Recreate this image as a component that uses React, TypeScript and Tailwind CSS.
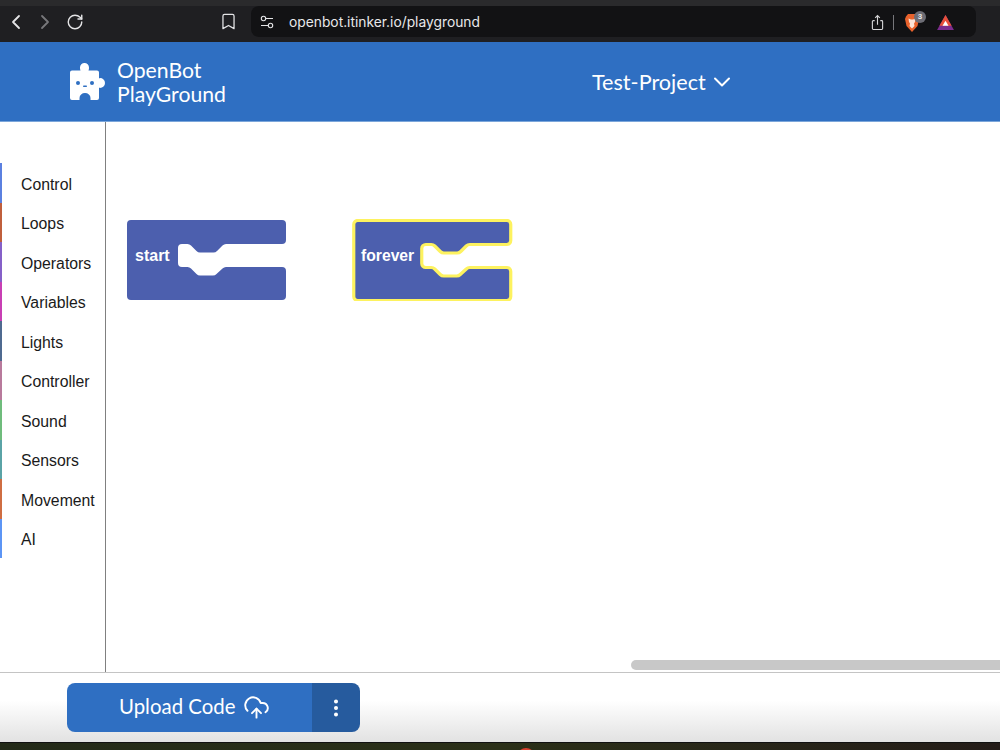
import { ChevronLeft, ChevronRight, RotateCw, Bookmark, ChevronDown, CloudUpload, EllipsisVertical } from "lucide-react";

const cats: [string, string][] = [
  ["Control", "bg-[#5b80e0]"],
  ["Loops", "bg-[#c05f3c]"],
  ["Operators", "bg-[#8560c8]"],
  ["Variables", "bg-[#c83fb4]"],
  ["Lights", "bg-[#4f6a90]"],
  ["Controller", "bg-[#b87a9c]"],
  ["Sound", "bg-[#6fbc7c]"],
  ["Sensors", "bg-[#5aa3a6]"],
  ["Movement", "bg-[#cf6d42]"],
  ["AI", "bg-[#5c95f5]"],
];

function blockPath(w: number, n: number) {
  return `M4 0H${w - 4}a4 4 0 0 1 4 4V20a4 4 0 0 1 -4 4H${n + 48}q-2 0 -3.500 1.500L${n + 39} 31q-1.500 1.500 -3.500 1.500H${n + 22}q-2 0 -3.500 -1.500L${n + 13} 25.500q-1.500 -1.500 -3.500 -1.500H${n + 4}a4 4 0 0 0 -4 4V43a4 4 0 0 0 4 4H${n + 9.5}q2 0 3.500 1.500L${n + 18.5} 54q1.500 1.500 3.500 1.500H${n + 35}q2 0 3.500 -1.500L${n + 44.5} 48.500q1.500 -1.500 3.500 -1.500H${w - 4}a4 4 0 0 1 4 4V76a4 4 0 0 1 -4 4H4a4 4 0 0 1 -4 -4V4a4 4 0 0 1 4 -4Z`;
}

export default function App() {
  return (
    <div className="relative flex h-[750px] w-[1000px] flex-col overflow-hidden bg-white font-['Liberation_Sans',sans-serif]">
      {/* browser chrome */}
      <div className="h-[42px] shrink-0 bg-[#1f1f22] border-t-[6px] border-[#2a2a2c] flex items-start text-[#e4e4e6]">
        <div className="flex items-center h-[31px] pl-[4px] w-[219px]">
          <ChevronLeft size={24} strokeWidth={1.8} />
          <ChevronRight size={24} strokeWidth={1.8} className="ml-[5px] text-[#77777b]" />
          <RotateCw size={18} strokeWidth={1.9} className="ml-[9px]" />
        </div>
        <div className="w-[32px] h-[31px] flex items-center">
          <Bookmark size={19} strokeWidth={1.6} />
        </div>
        <div className="flex h-[31px] w-[725px] items-center rounded-lg bg-[#121214]">
          <svg width="14" height="14" viewBox="0 0 14 14" className="ml-[9px]" fill="none" stroke="#e4e4e6" strokeWidth="1.1">
            <circle cx="3.5" cy="3.5" r="2.2" />
            <path d="M6 3.500h7M1 10.500h7" />
            <circle cx="10.5" cy="10.5" r="2.2" />
          </svg>
          <span className="ml-[15px] mt-[2px] text-[13.8px] font-['Inter',sans-serif] text-[#e8e8ea]">openbot.itinker.io/playground</span>
          <div className="ml-auto mt-[2px] flex items-center">
            <svg width="13" height="18" viewBox="0 0 14 18" fill="none" stroke="#d4d4d6" strokeWidth="1.2">
              <path d="M4 6.500H2.500a1 1 0 0 0-1 1V15a1 1 0 0 0 1 1h9a1 1 0 0 0 1-1V7.500a1 1 0 0 0-1-1H10M7 11V1M4.500 3.500 7 1l2.500 2.500" />
            </svg>
            <div className="ml-[9px] h-[15px] w-px bg-[#77777b]" />
            <div className="relative ml-[11px] h-[18px] w-[14px]">
              <svg width="14" height="18" viewBox="0 0 14 18" className="block">
                <path d="M3 0h8l2 2.500L14 5l-1.500 7L7 18 1.500 12 0 5l1-2.500Z" fill="#e8622c" />
                <path d="M3.500 4.500 6 5.500h2l2.500-1-.5 3.500-1 1.500L9.500 12 7 14.500 4.500 12 5 9.500 4 8Z" fill="#fbe3d6" />
              </svg>
              <span className="absolute -right-[7px] -top-[3px] flex h-[12px] w-[12px] items-center justify-center rounded-full bg-[#6d6d75] text-[8px] font-bold text-[#e8e8ea]">3</span>
            </div>
            <svg width="17" height="15" viewBox="0 0 18 16" className="ml-[18px] mr-[22px]">
              <path d="M9 0 18 16H0Z" fill="#7b2d8e" />
              <path d="M9 0 15.500 11.500H2.500Z" fill="#e8503a" />
              <path d="M9 6l3.200 5.500H5.800Z" fill="#fff" />
            </svg>
          </div>
        </div>
      </div>

      {/* header */}
      <div className="relative flex h-[79px] shrink-0 items-center bg-[#2f6fc2] text-white font-['Lato',sans-serif]">
        <svg width="36" height="37" viewBox="0 0 36 37" className="ml-[70px]" fill="#fff">
          <path d="M2 7.500H10.500C10 6.500 10 5.500 10 4.500a4.500 4.500 0 0 1 9 0c0 1 0 2-.5 3H27a2 2 0 0 1 2 2V15.500c.3-.3.6-.5 1-.5a5 5 0 0 1 0 10c-.4 0-.7-.2-1-.5V35a2 2 0 0 1-2 2H20.500V35a5.500 5 0 0 0-11 0V37H2a2 2 0 0 1-2-2V9.500a2 2 0 0 1 2-2Z" />
          <circle cx="8" cy="20" r="2" fill="#2f6fc2" />
          <circle cx="22" cy="20" r="2" fill="#2f6fc2" />
          <rect x="13" y="22.500" width="4" height="1.400" rx=".7" fill="#2f6fc2" />
        </svg>
        <div className="ml-[11px] flex flex-col text-[21.2px] leading-[24px]">
          <span>OpenBot</span>
          <span>PlayGround</span>
        </div>
        <div className="absolute left-[592px] top-0 flex h-full items-center pt-[1px] text-[21.6px]">
          <span>Test-Project</span>
          <ChevronDown size={28} strokeWidth={1.7} className="ml-[2px]" />
        </div>
      </div>
      <div className="h-px shrink-0 bg-[#7ba6da]" />

      {/* workspace */}
      <div className="relative flex h-[551px] shrink-0 border-b border-[#c4c4c4]">
        <div className="flex w-[106px] shrink-0 flex-col border-r border-[#808080] pt-[41px]">
          {cats.map(([name, color]) => (
            <div key={name} className="flex h-[39.5px] items-center">
              <div className={`h-full w-[2px] ${color}`} />
              <span className="ml-[19px] mt-[4px] text-[15.8px] text-[#1a1a1a]">{name}</span>
            </div>
          ))}
        </div>
        <div className="relative flex-1">
          <div className="absolute left-[21px] top-[98px]">
            <svg width="159" height="80" viewBox="0 0 159 80" className="block">
              <path d={blockPath(159, 51)} fill="#4c5fae" />
            </svg>
            <span className="absolute left-[8px] top-[27px] text-[16px] leading-[18px] font-bold text-white">start</span>
          </div>
          <div className="absolute left-[246px] top-[97px]">
            <svg width="162" height="82" viewBox="-1.750 -1.500 162 82" className="block">
              <path d={blockPath(157, 68)} fill="#4c5fae" stroke="#fdf25f" strokeWidth="3.2" />
            </svg>
            <span className="absolute left-[9px] top-[28px] text-[15.7px] leading-[18px] font-bold text-white">forever</span>
          </div>
        </div>
        <div className="absolute bottom-[2px] left-[631px] right-0 h-[10px] rounded-l-[5px] bg-[#c8c8c8]" />
      </div>

      {/* footer */}
      <div className="flex h-[69px] shrink-0 items-start bg-gradient-to-b from-white from-40% to-[#e2e2e2] pl-[67px] pt-[10px] font-['Lato',sans-serif]">
        <div className="flex h-[49px] w-[293px] overflow-hidden rounded-lg text-white">
          <div className="flex w-[245px] items-center bg-[#2f6fc2] pl-[52px] text-[20.4px]">
            <span className="-mt-[3px]">Upload Code</span>
            <CloudUpload size={27} strokeWidth={1.7} className="ml-[8px]" />
          </div>
          <div className="flex flex-1 items-center justify-center bg-[#265b9e]">
            <EllipsisVertical size={22} strokeWidth={2.4} />
          </div>
        </div>
      </div>

      {/* desktop strip */}
      <div className="relative flex-1 border-t border-[#111] bg-gradient-to-r from-[#232a18] via-[#2b3018] to-[#241c18]">
        <div className="absolute left-[517px] top-[5px] h-[18px] w-[18px] rounded-full bg-[#d8402f]" />
      </div>
    </div>
  );
}
